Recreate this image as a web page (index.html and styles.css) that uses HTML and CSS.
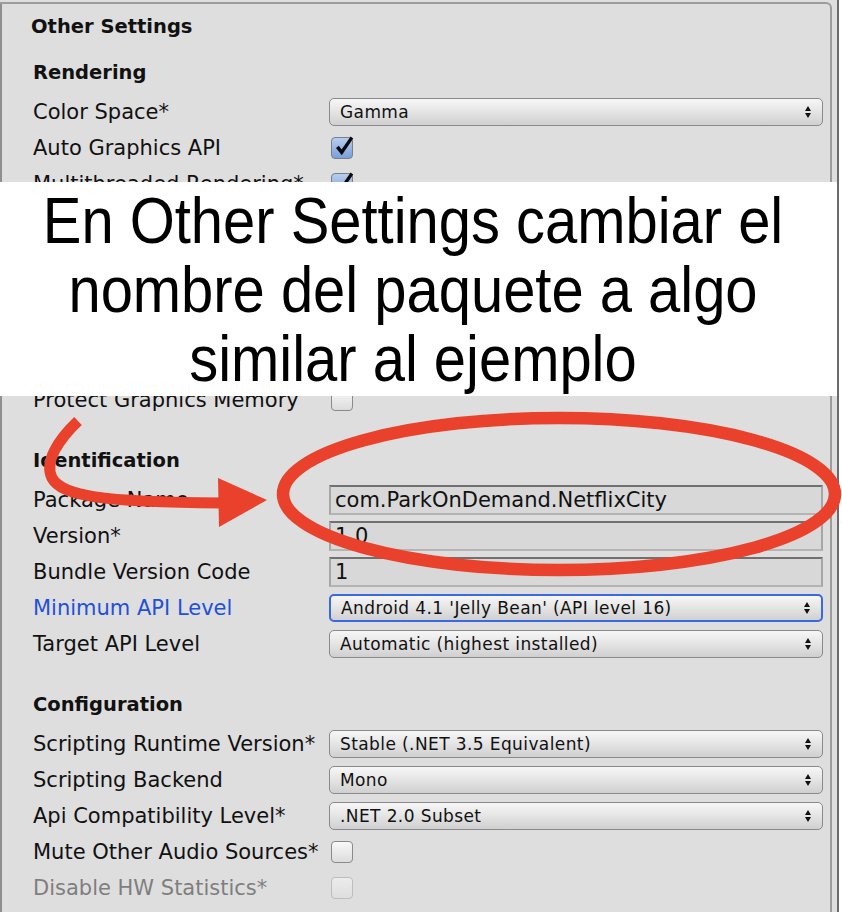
FILE: index.html
```html
<!DOCTYPE html>
<html>
<head>
<meta charset="utf-8">
<link rel="stylesheet" href="styles.css">
</head>
<body>
<div class="window">
  <div class="panel">
    <div class="title">Other Settings</div>

    <section class="group first">
      <div class="group-title">Rendering</div>
      <div class="row"><span class="label">Color Space*</span>
        <div class="popup"><span class="popup-text">Gamma</span><svg class="arrows" viewBox="0 0 6 12" width="6" height="12"><path d="M0 5 L3 0 L6 5 Z M0 7 L6 7 L3 12 Z"/></svg></div></div>
      <div class="row"><span class="label">Auto Graphics API</span>
        <span class="check on"><svg viewBox="0 0 22 22" width="22" height="22"><path d="M4 12 L6.8 9.8 L9.6 13.6 L18.6 0.6 L21.2 2.4 L9.8 19.2 Z"/></svg></span></div>
      <div class="row"><span class="label">Multithreaded Rendering*</span>
        <span class="check on"><svg viewBox="0 0 22 22" width="22" height="22"><path d="M4 12 L6.8 9.8 L9.6 13.6 L18.6 0.6 L21.2 2.4 L9.8 19.2 Z"/></svg></span></div>
      <div class="covered-rows"></div>
      <div class="row"><span class="label">Protect Graphics Memory</span>
        <span class="check"></span></div>
    </section>

    <section class="group">
      <div class="group-title">Identification</div>
      <div class="row"><span class="label">Package Name</span>
        <div class="field">com.ParkOnDemand.NetflixCity</div></div>
      <div class="row"><span class="label">Version*</span>
        <div class="field">1.0</div></div>
      <div class="row"><span class="label">Bundle Version Code</span>
        <div class="field">1</div></div>
      <div class="row"><span class="label label-blue">Minimum API Level</span>
        <div class="popup popup-focus"><span class="popup-text">Android 4.1 'Jelly Bean' (API level 16)</span><svg class="arrows" viewBox="0 0 6 12" width="6" height="12"><path d="M0 5 L3 0 L6 5 Z M0 7 L6 7 L3 12 Z"/></svg></div></div>
      <div class="row"><span class="label">Target API Level</span>
        <div class="popup"><span class="popup-text">Automatic (highest installed)</span><svg class="arrows" viewBox="0 0 6 12" width="6" height="12"><path d="M0 5 L3 0 L6 5 Z M0 7 L6 7 L3 12 Z"/></svg></div></div>
    </section>

    <section class="group">
      <div class="group-title">Configuration</div>
      <div class="row"><span class="label">Scripting Runtime Version*</span>
        <div class="popup"><span class="popup-text">Stable (.NET 3.5 Equivalent)</span><svg class="arrows" viewBox="0 0 6 12" width="6" height="12"><path d="M0 5 L3 0 L6 5 Z M0 7 L6 7 L3 12 Z"/></svg></div></div>
      <div class="row"><span class="label">Scripting Backend</span>
        <div class="popup"><span class="popup-text">Mono</span><svg class="arrows" viewBox="0 0 6 12" width="6" height="12"><path d="M0 5 L3 0 L6 5 Z M0 7 L6 7 L3 12 Z"/></svg></div></div>
      <div class="row"><span class="label">Api Compatibility Level*</span>
        <div class="popup"><span class="popup-text">.NET 2.0 Subset</span><svg class="arrows" viewBox="0 0 6 12" width="6" height="12"><path d="M0 5 L3 0 L6 5 Z M0 7 L6 7 L3 12 Z"/></svg></div></div>
      <div class="row"><span class="label">Mute Other Audio Sources*</span>
        <span class="check"></span></div>
      <div class="row"><span class="label label-disabled">Disable HW Statistics*</span>
        <span class="check check-disabled"></span></div>
    </section>
  </div>
  <div class="gutter"></div>
  <div class="edge"></div>
  <div class="rest"></div>

  <div class="callout">
    <p class="callout-text">En Other Settings cambiar el<br>nombre del paquete a algo<br>similar al ejemplo</p>
  </div>

  <svg class="marks" viewBox="0 0 842 912" width="842" height="912">
    <ellipse cx="559" cy="494" rx="276" ry="76" fill="none" stroke="#e9412b" stroke-width="12.5"/>
    <path d="M 78 421 C 58 440, 44 462, 52 478 C 62 496, 100 502, 222 503" fill="none" stroke="#e9412b" stroke-width="11"/>
    <polygon points="218,478 267,500 219,527" fill="#e9412b"/>
  </svg>
</div>
</body>
</html>
```

FILE: styles.css
```css
* { box-sizing: border-box; }

html, body {
  margin: 0;
  padding: 0;
  background: #ffffff;
}

body {
  font-family: "DejaVu Sans", "Noto Sans", sans-serif;
  color: #111111;
}

.window {
  position: relative;
  display: flex;
  width: 842px;
  height: 912px;
  overflow: hidden;
  background: #dedede;
}

.panel {
  flex: none;
  width: 832px;
  margin-top: 2px;
  padding: 0 7px 0 31px;
  background: #dedede;
  border-left: 2px solid #8f8f8f;
  border-top: 2px solid #9c9c9c;
  border-right: 2px solid #9c9c9c;
  border-top-right-radius: 6px;
}

.gutter {
  flex: none;
  width: 5px;
  background: #dedede;
}

.edge {
  flex: none;
  width: 2px;
  background: #6b6b6b;
}

.rest {
  flex: 1;
  background: #ffffff;
}

.title {
  height: 36px;
  margin-top: 4px;
  margin-left: -2px;
  display: flex;
  align-items: center;
  font-weight: bold;
  font-size: 19.5px;
}

.group { margin-top: 24px; }
.group.first { margin-top: 10px; }

.group-title {
  height: 36px;
  margin-bottom: 4px;
  display: flex;
  align-items: center;
  font-weight: bold;
  font-size: 19.5px;
}

.row {
  height: 36px;
  display: grid;
  grid-template-columns: 296px 1fr;
  align-items: center;
}

.covered-rows {
  height: 180px;
}

.label {
  font-size: 21px;
  white-space: nowrap;
}

.label-blue { color: #2350d8; }
.label-disabled { color: #7e7e7e; }

.popup {
  height: 28px;
  display: flex;
  align-items: center;
  justify-content: space-between;
  padding: 0 11px 0 10px;
  border: 1.5px solid #8a8a8a;
  border-radius: 5px;
  background: linear-gradient(#f7f7f7, #e6e6e6 45%, #d0d0d0);
  font-size: 17px;
  letter-spacing: 0.4px;
  white-space: nowrap;
}

.popup-focus {
  border: 2px solid #3a69e0;
}

.arrows { fill: #111111; flex: none; }

.field {
  height: 30px;
  display: flex;
  align-items: center;
  padding: 0 4px;
  border-style: solid;
  border-width: 2px;
  border-color: #707070 #a6a6a6 #b4b4b4 #a6a6a6;
  background: #d8d8d8;
  font-size: 21px;
  white-space: nowrap;
}

.check {
  width: 22px;
  height: 22px;
  margin-left: 2px;
  border: 1.5px solid #8a8a8a;
  border-radius: 4px;
  background: linear-gradient(#f8f8f8, #dcdcdc);
  position: relative;
}

.check.on {
  background: linear-gradient(#b6cdf0, #7a9fdb);
  border-color: #7b7f88;
}

.check svg {
  position: absolute;
  left: 0;
  top: -2px;
  fill: #0a0a0a;
}

.check-disabled {
  border-color: #bdbdbd;
  background: linear-gradient(#ececec, #dedede);
}

.callout {
  position: absolute;
  left: 0;
  top: 182px;
  width: 837px;
  height: 214px;
  background: #ffffff;
  padding-top: 5px;
}

.callout-text {
  margin: 0;
  width: 826px;
  text-align: center;
  font-family: "Liberation Sans", Arial, sans-serif;
  font-size: 64px;
  line-height: 69px;
  color: #000000;
  transform: scaleX(0.905);
  transform-origin: 413px 0;
  white-space: nowrap;
}

.marks {
  position: absolute;
  left: 0;
  top: 0;
  pointer-events: none;
}
```
